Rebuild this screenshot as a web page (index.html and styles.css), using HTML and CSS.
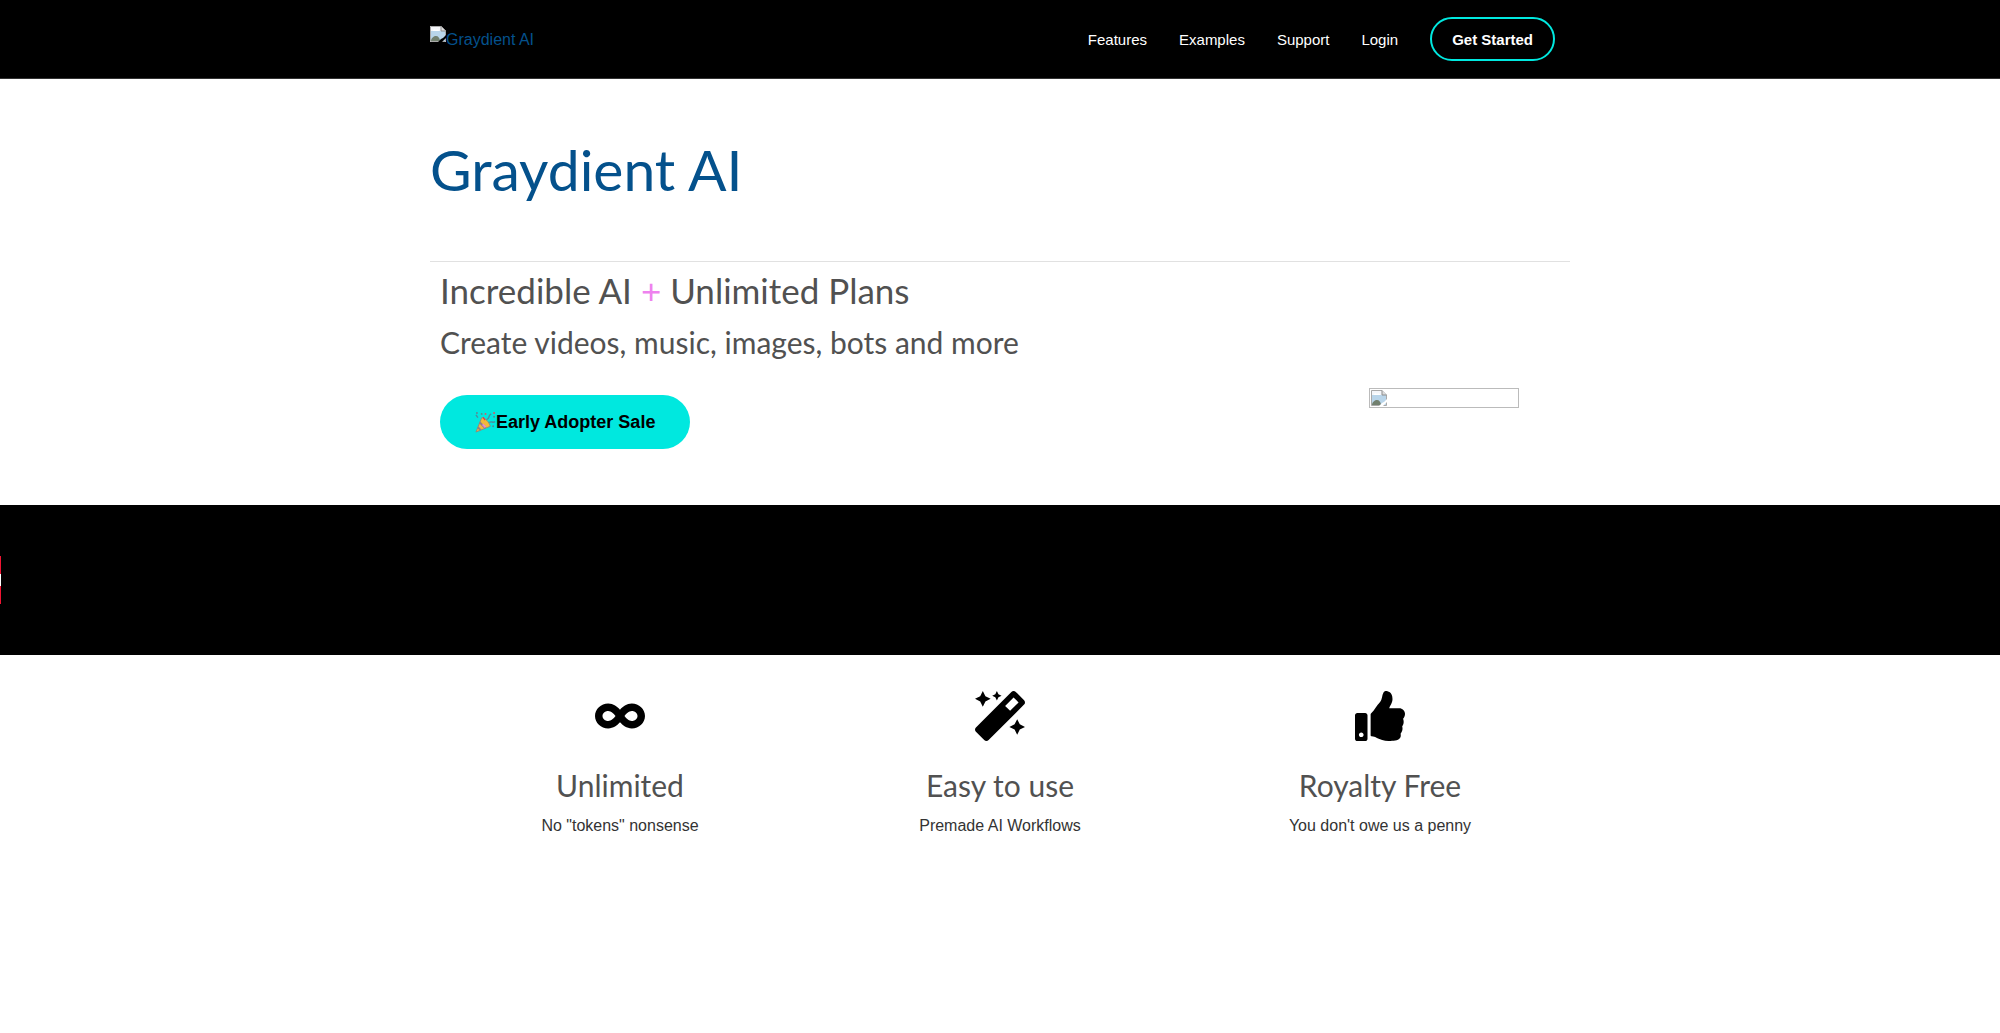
FILE: index.html
```
<!DOCTYPE html>
<html lang="en">
<head>
<meta charset="utf-8">
<meta name="viewport" content="width=device-width, initial-scale=1">
<title>Graydient AI</title>
<link rel="stylesheet" href="styles.css">
</head>

<body>

<svg class="defs" width="0" height="0" aria-hidden="true">
	<symbol id="missing" viewBox="0 0 16 16">
		<path fill="#f4f6fa" d="M0 0h11l5 5v11H0z"/>
		<path fill="#b9d5ea" d="M1 5h14v10H1z"/>
		<path fill="#fff" d="M3 5c0-2 2-2 3-1 2-1 3 0 3 1z"/>
		<path fill="#72806f" d="M1 15c0-3 3-5 5-5s4 2 4 5z"/>
		<path fill="none" stroke="#a9a9a9" d="M.5 15.500V.5h10.500l4.500 4.500v10.500z"/>
		<path fill="#ddd" stroke="#8d8d8d" d="M11 .5V5h4.500"/>
		<path fill="currentColor" d="M8 16l3-3 2-1 3-3v3l-4 4z"/>
	</symbol>
</svg>

<header class="site-header">
	<div class="container header-inner">
		<a href="#" class="logo"><svg class="missing" aria-hidden="true"><use href="#missing"/></svg><span>Graydient AI</span></a>
		<nav class="menu">
			<a href="#">Features</a>
			<a href="#">Examples</a>
			<a href="#">Support</a>
			<a href="#">Login</a>
			<a href="#" class="started">Get Started</a>
		</nav>
	</div>
</header>

<main>
	<div class="container">
		<h1><a href="#">Graydient AI</a></h1>
		<section class="hero">
			<div class="hero-text">
				<h2>Incredible AI <span class="plus">+</span> Unlimited Plans</h2>
				<h3>Create videos, music, images, bots and more</h3>
				<a href="#" class="sale">
					<svg class="party" viewBox="0 0 22 22" aria-hidden="true">
						<path fill="#f0b93a" stroke="#8b8a80" d="M1 21L7 6c4 0 8 5 9 9z"/>
						<path fill="none" stroke="#8c7d8e" stroke-width="2" d="M5 11l6 6M3 16l3 3"/>
						<path fill="none" stroke="#e58cd0" stroke-width="2" d="M8 13l3 3"/>
						<path fill="#e8344e" d="M9 5l2 3-1 1-2-3z"/>
						<path fill="none" stroke="#4a8f9c" stroke-width="1.500" d="M12 8c4-1 1-4 5-6M15 11c2-2 4 1 6-1M3 6L1 3"/>
						<g fill="#5d8790"><circle cx="7" cy="2" r="1"/><circle cx="20" cy="5" r="1"/><circle cx="19" cy="15" r="1"/><circle cx="2" cy="1" r="1"/></g>
						<g fill="#e0505c"><circle cx="11" cy="2" r="1"/><circle cx="20" cy="1" r="1"/></g>
					</svg>Early Adopter Sale</a>
			</div>
			<div class="hero-image">
				<div class="empty-image"><svg class="missing" aria-hidden="true"><use href="#missing"/></svg></div>
			</div>
		</section>
	</div>

	<div class="strip"><span class="strip-item"></span></div>

	<section class="container features">
		<div class="feature">
			<svg class="icon" viewBox="0 0 640 512" aria-hidden="true"><path d="M471.1 96C405 96 353.3 137.3 320 174.6 286.7 137.3 235 96 168.9 96 75.8 96 0 167.8 0 256s75.8 160 168.9 160c66.1 0 117.8-41.3 151.1-78.6 33.3 37.3 85 78.6 151.1 78.6 93.1 0 168.9-71.8 168.9-160S564.2 96 471.1 96zM168.9 320c-40.2 0-72.9-28.7-72.9-64s32.7-64 72.9-64c38.2 0 73.4 36.1 94 64-20.4 27.6-55.900 64-94 64zm302.2 0c-38.2 0-73.4-36.1-94-64 20.4-27.6 55.900-64 94-64 40.2 0 72.9 28.7 72.9 64s-32.7 64-72.9 64z"/></svg>
			<h3>Unlimited</h3>
			<p>No "tokens" nonsense</p>
		</div>
		<div class="feature">
			<svg class="icon" viewBox="0 0 512 512" aria-hidden="true"><path d="M224 96l16-32 32-16-32-16-16-32-16 32-32 16 32 16 16 32zM80 160l26.66-53.33L160 80l-53.34-26.67L80 0 53.34 53.33 0 80l53.34 26.67L80 160zm352 128l-26.66 53.33L352 368l53.34 26.67L432 448l26.66-53.33L512 368l-53.34-26.67L432 288zm70.62-193.77L417.77 9.380C411.53 3.120 403.34 0 395.15 0c-8.190 0-16.380 3.120-22.630 9.380L9.380 372.52c-12.500 12.500-12.500 32.760 0 45.250l84.850 84.850c6.250 6.250 14.440 9.370 22.620 9.370 8.190 0 16.380-3.120 22.630-9.370l363.14-363.15c12.500-12.480 12.500-32.750 0-45.240zM359.45 203.46l-50.910-50.910 86.600-86.600 50.910 50.910-86.600 86.600z"/></svg>
			<h3>Easy to use</h3>
			<p>Premade AI Workflows</p>
		</div>
		<div class="feature">
			<svg class="icon" viewBox="0 0 512 512" aria-hidden="true"><path d="M104 224H24c-13.255 0-24 10.745-24 24v240c0 13.255 10.745 24 24 24h80c13.255 0 24-10.745 24-24V248c0-13.255-10.745-24-24-24zM64 472c-13.255 0-24-10.745-24-24s10.745-24 24-24 24 10.745 24 24-10.745 24-24 24zM384 81.452c0 42.416-25.970 66.208-33.277 94.548h101.723c33.397 0 59.397 27.746 59.553 58.098.084 17.938-7.546 37.249-19.439 49.197l-.11.11c9.836 23.337 8.237 56.037-9.308 79.469 8.681 25.895-.069 57.704-16.382 74.757 4.298 17.598 2.244 32.575-6.148 44.632C440.202 511.587 389.616 512 346.839 512l-2.845-.001c-48.287-.017-87.806-17.598-119.560-31.725-15.957-7.099-36.821-15.887-52.651-16.178-6.540-.120-11.783-5.457-11.783-11.998v-213.770c0-3.200 1.282-6.271 3.558-8.521 39.614-39.144 56.648-80.587 89.117-113.111 14.804-14.832 20.188-37.236 25.393-58.902C282.515 39.293 291.817 0 312 0c24 0 72 8 72 81.452z"/></svg>
			<h3>Royalty Free</h3>
			<p>You don't owe us a penny</p>
		</div>
	</section>
</main>

</body>
</html>
```
FILE: styles.css
```
* {
	box-sizing: border-box;
}
body {
	margin: 0;
	background: #fff;
	color: #333;
	font-family: "Liberation Sans", Arial, Helvetica, sans-serif;
	font-size: 16px;
	line-height: 24px;
}
a {
	color: #04518c;
	text-decoration: none;
}
h1, h2, h3, p {
	margin: 0;
}
h1, h2, h3 {
	font-family: Lato, sans-serif;
	font-weight: 400;
	color: #515151;
}
.defs {
	display: block;
}
.container {
	max-width: 1140px;
	margin: 0 auto;
}

/* header */
.site-header {
	background: #000;
	border-bottom: 1px solid #333;
}
.header-inner {
	display: flex;
	justify-content: space-between;
	align-items: center;
	padding: 17px 15px 17px 0;
}
.logo {
	display: flex;
	align-items: flex-start;
}
.logo span {
	padding-top: 2px;
}
.missing {
	width: 16px;
	height: 16px;
	flex: none;
	color: #fff;
}
.logo .missing {
	color: #000;
}
.menu {
	display: flex;
	align-items: center;
	gap: 32px;
	font-size: 15px;
}
.menu a {
	padding-top: 2px;
	color: #fff;
}
.menu .started {
	padding: 9px 20px 7px;
	border: 2px solid #00e8df;
	border-radius: 22px;
	font-weight: 700;
}

/* hero */
h1 {
	padding: 54px 0 55px;
	border-bottom: 1px solid #e1e1e1;
	font-size: 57px;
	line-height: 73px;
}
.hero {
	display: flex;
	align-items: center;
	padding: 0 10px 56px;
}
.hero-text {
	flex: 1;
}
h2 {
	font-size: 35px;
	line-height: 56px;
}
.hero h3 {
	font-size: 30px;
	line-height: 48px;
}
.plus {
	color: #ee82ee;
}
.sale {
	display: inline-flex;
	align-items: center;
	margin-top: 29px;
	padding: 15px 35px;
	border-radius: 27px;
	background: #00e8df;
	color: #000;
	font-size: 18px;
	font-weight: 700;
}
.party {
	width: 21px;
	height: 21px;
}
.hero-image {
	padding: 84px 41px 0 0;
}
.empty-image {
	display: flex;
	width: 150px;
	padding: 1px;
	border: 1px solid #bbb;
}

/* black scrolling strip */
.strip {
	display: flex;
	align-items: center;
	height: 150px;
	background: #000;
}
.strip-item {
	width: 1px;
	height: 48px;
	border: solid #f01432;
	border-width: 18px 0;
	background: #fff;
}

/* features */
.features {
	display: grid;
	grid-template-columns: repeat(3, 1fr);
	padding-top: 36px;
	text-align: center;
}
.icon {
	display: block;
	width: 50px;
	height: 50px;
	margin: 0 auto 20px;
	fill: #000;
}
.feature h3 {
	margin-bottom: 5px;
	font-size: 30px;
	line-height: 48px;
}
```
